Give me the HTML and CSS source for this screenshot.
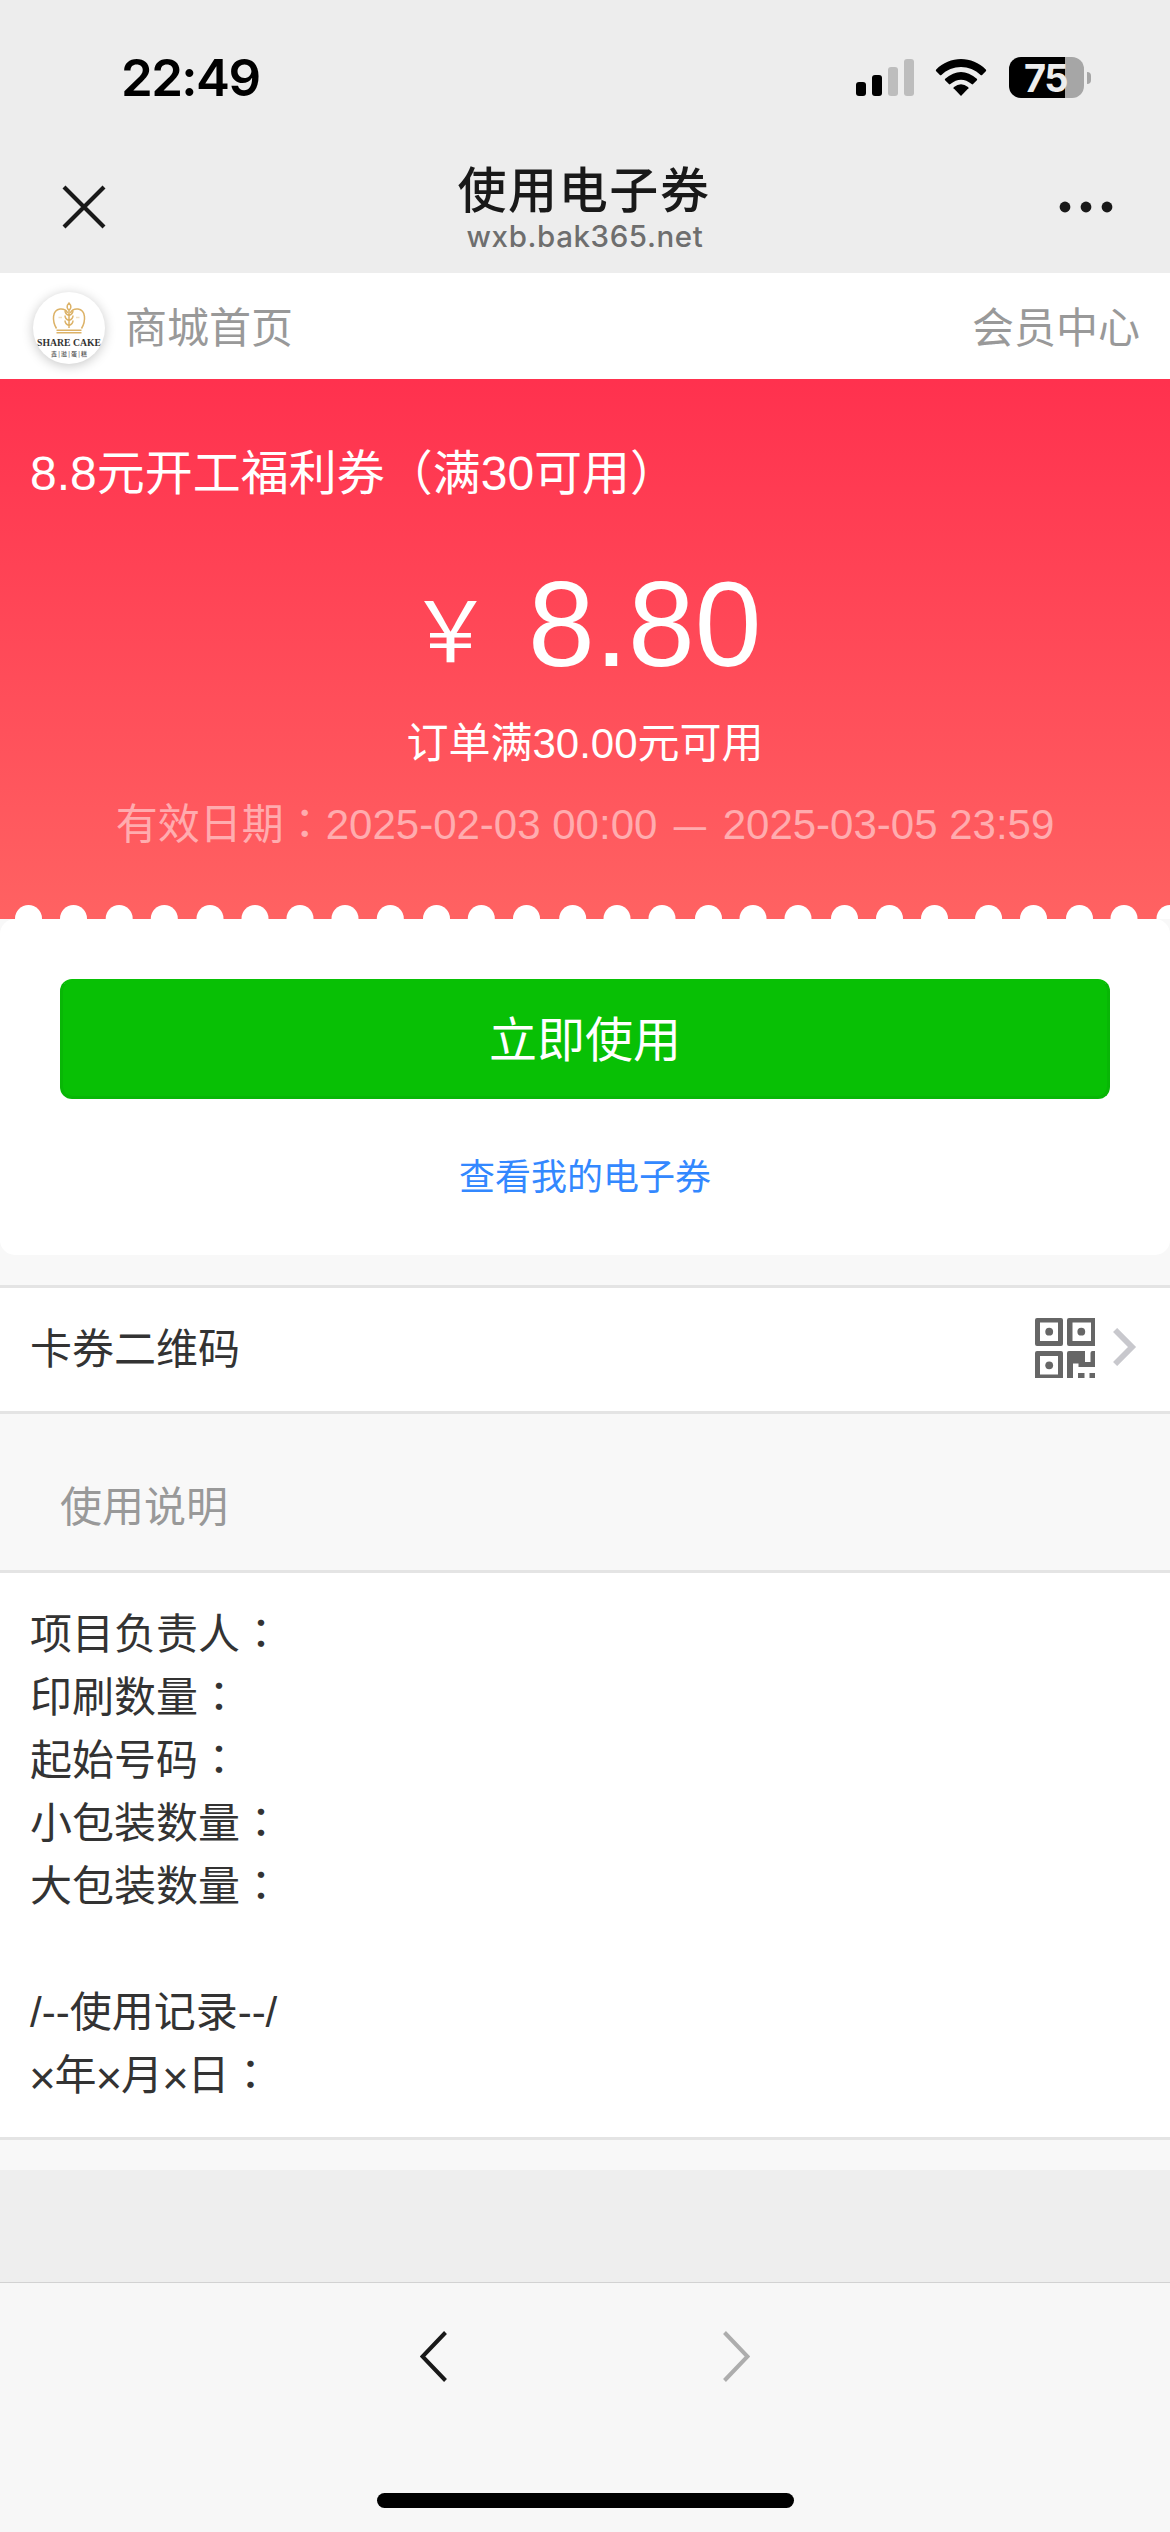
FILE: index.html
```html
<!DOCTYPE html>
<html lang="zh-CN">
<head>
<meta charset="utf-8">
<title>使用电子券</title>
<link rel="stylesheet" href="styles.css">
</head>
<body>
<header class="top">
  <div class="status">
    <span class="time">22:49</span>
    <div class="status-icons">
      <svg width="58" height="37" viewBox="0 0 58 37">
        <rect x="0" y="23" width="10" height="14" rx="3"/>
        <rect x="16" y="16" width="10" height="21" rx="3"/>
        <rect x="32" y="8" width="10" height="29" rx="3" fill="#bdbdbd"/>
        <rect x="48" y="0" width="10" height="37" rx="3" fill="#bdbdbd"/>
      </svg>
      <svg class="wifi" width="52" height="37" viewBox="0 0 52 37">
        <path d="M26 37 L18.6 29.3 Q18.3 28.6 19 28 Q26 22.6 33 28 Q33.700 28.6 33.400 29.300 Z"/>
        <path d="M10.200 19.800 Q26 6 41.800 19.800 Q42.600 20.500 41.900 21.300 L38.100 25.100 Q37.400 25.700 36.600 25.100 Q26 16.200 15.400 25.100 Q14.600 25.700 13.900 25.100 L10.100 21.300 Q9.400 20.500 10.200 19.800 Z"/>
        <path d="M1.200 10.600 C14.500 -3.500 37.500 -3.500 50.800 10.600 Q51.500 11.400 50.800 12.200 L47.100 15.900 Q46.400 16.600 45.600 15.900 C35 5.200 17 5.200 6.400 15.900 Q5.600 16.600 4.900 15.900 L1.200 12.200 Q0.500 11.400 1.200 10.600 Z"/>
      </svg>
      <div class="battery"><div class="battery-body"><span>75</span></div><i class="battery-nub"></i></div>
    </div>
  </div>
  <div class="titlebar">
    <svg class="close" width="44" height="44" viewBox="0 0 44 44"><path d="M2 2L42 42M42 2L2 42" stroke="#191919" stroke-width="4.200" fill="none"/></svg>
    <div class="heading">
      <h1>使用电子券</h1>
      <p>wxb.bak365.net</p>
    </div>
    <svg class="more" width="54" height="12" viewBox="0 0 54 12" fill="#191919"><circle cx="6" cy="6" r="5.400"/><circle cx="27" cy="6" r="5.400"/><circle cx="48" cy="6" r="5.400"/></svg>
  </div>
</header>

<nav class="shop">
  <a class="home">
    <svg class="logo" width="72" height="72" viewBox="0 0 72 72">
      <g fill="none" stroke="#dcb267" stroke-width="1.500">
        <path d="M23.500 36.500C19 29 19 18 27 17C31 16.500 34 18.500 34.500 21M48.500 36.500C53 29 53 18 45 17C41 16.500 38 18.500 37.500 21"/>
        <path d="M23.500 38.200H48.500M23.500 40.800H48.500"/>
        <path d="M36 11C33 14 34 17 36 18C38 17 39 14 36 11ZM36 17V36M32 18.500Q32 22 36 23.500Q40 22 40 18.500M32 23.500Q32 27 36 28.500Q40 27 40 23.500M32 28.500Q32 32 36 33.500Q40 32 40 28.500"/>
        <path d="M25.500 25.500H29M43 25.500H46.500" stroke-opacity=".4"/>
      </g>
      <text class="logo-name" x="36" y="54" textLength="64" lengthAdjust="spacingAndGlyphs">SHARE CAKE</text>
      <text class="logo-sub" x="36" y="63.500" textLength="36" lengthAdjust="spacing">鑫|溢|蛋|糕</text>
    </svg>
    <span>商城首页</span>
  </a>
  <a>会员中心</a>
</nav>

<section class="coupon">
  <h2>8.8元开工福利券（满30可用）</h2>
  <div class="price"><span class="yen">￥</span> 8.80</div>
  <p class="rule">订单满30.00元可用</p>
  <p class="date">有效日期<b class="colon" lang="zh-TW">：</b>2025-02-03 00:00 <span class="dash">—</span> 2025-03-05 23:59</p>
  <svg class="scallop" width="1170" height="14" viewBox="0 0 1170 14" fill="#fff">
    <circle cx="28.500" cy="13.500" r="13.500"/><circle cx="73.500" cy="13.500" r="13.500"/><circle cx="119.200" cy="13.500" r="13.500"/><circle cx="164.300" cy="13.500" r="13.500"/><circle cx="210" cy="13.500" r="13.500"/><circle cx="255" cy="13.500" r="13.500"/><circle cx="300" cy="13.500" r="13.500"/><circle cx="345" cy="13.500" r="13.500"/><circle cx="390.300" cy="13.500" r="13.500"/><circle cx="436.500" cy="13.500" r="13.500"/><circle cx="481.300" cy="13.500" r="13.500"/><circle cx="526.500" cy="13.500" r="13.500"/><circle cx="572.700" cy="13.500" r="13.500"/><circle cx="617" cy="13.500" r="13.500"/><circle cx="662" cy="13.500" r="13.500"/><circle cx="708.500" cy="13.500" r="13.500"/><circle cx="753" cy="13.500" r="13.500"/><circle cx="798" cy="13.500" r="13.500"/><circle cx="844.500" cy="13.500" r="13.500"/><circle cx="889.500" cy="13.500" r="13.500"/><circle cx="934.500" cy="13.500" r="13.500"/><circle cx="988.600" cy="13.500" r="13.500"/><circle cx="1033.500" cy="13.500" r="13.500"/><circle cx="1079.500" cy="13.500" r="13.500"/><circle cx="1124" cy="13.500" r="13.500"/><circle cx="1170" cy="13.500" r="13.500"/>
  </svg>
</section>

<section class="actions">
  <button class="use">立即使用</button>
  <a class="mine">查看我的电子券</a>
</section>

<section class="row">
  <span>卡券二维码</span>
  <div class="row-end">
    <svg width="60" height="60" viewBox="0 0 60 60" fill="#666">
      <path fill-rule="evenodd" d="M2 0H26Q28 0 28 2V26Q28 28 26 28H2Q0 28 0 26V2Q0 0 2 0ZM5 4.500V23H23V4.500Z"/>
      <path fill-rule="evenodd" d="M34 0H60V28H34Q32 28 32 26V2Q32 0 34 0ZM37.500 4.500V23H56V4.500Z"/>
      <path fill-rule="evenodd" d="M2 33H26Q28 33 28 35V60H0V35Q0 33 2 33ZM5 38V56.500H23V38Z"/>
      <circle cx="14.200" cy="13.700" r="3.900"/><circle cx="46.300" cy="13.700" r="3.900"/><circle cx="14.200" cy="47.300" r="3.900"/>
      <path d="M34 33H50V44H55.500V35Q55.500 33 57.500 33H60V49H43.500V45.500H38V60H32V35Q32 33 34 33ZM43 55H49.500V60H43ZM54.500 55H60V60H54.500Z"/>
    </svg>
    <svg class="chevron" width="24" height="38" viewBox="0 0 24 38"><path d="M2.100 2L19 19L2.100 36" fill="none" stroke="#c8c8cd" stroke-width="5.800"/></svg>
  </div>
</section>

<h3 class="label">使用说明</h3>

<section class="notes">
  <p>项目负责人<b class="colon" lang="zh-TW">：</b></p>
  <p>印刷数量<b class="colon" lang="zh-TW">：</b></p>
  <p>起始号码<b class="colon" lang="zh-TW">：</b></p>
  <p>小包装数量<b class="colon" lang="zh-TW">：</b></p>
  <p>大包装数量<b class="colon" lang="zh-TW">：</b></p>
  <p>&nbsp;</p>
  <p>/--使用记录--/</p>
  <p><span class="times">×</span>年<span class="times">×</span>月<span class="times">×</span>日<b class="colon" lang="zh-TW">：</b></p>
</section>

<div class="rest"></div>

<footer class="toolbar">
  <div class="arrows">
    <svg width="27" height="51" viewBox="0 0 27 51"><path d="M25.500 1.500L2.500 25.500L25.500 49.500" fill="none" stroke="#191919" stroke-width="4"/></svg>
    <svg width="27" height="51" viewBox="0 0 27 51"><path d="M1.500 1.500L24.500 25.500L1.500 49.500" fill="none" stroke="#adadad" stroke-width="4"/></svg>
  </div>
  <div class="indicator"></div>
</footer>
</body>
</html>
```
FILE: styles.css
```css
* { box-sizing: border-box; margin: 0; padding: 0; }
body {
  width: 1170px;
  height: 2532px;
  display: flex;
  flex-direction: column;
  background: #f8f8f8;
  font: 42px/63px "Liberation Sans", "Noto Sans CJK SC", sans-serif;
  color: #333;
  overflow: hidden;
}
svg { display: block; flex: none; }
p, span, a, h1, h2, h3 { white-space: nowrap; font-weight: 400; }
.colon { font-family: "Noto Sans CJK TC", sans-serif; font-weight: 400; line-height: 1; }

.top { height: 273px; background: #ededed; }
.status {
  height: 156px;
  display: flex;
  justify-content: space-between;
  padding: 57px 79px 0 121px;
}
.time { font: 600 51px/42px Inter, sans-serif; color: #000; letter-spacing: -1.6px; }
.status-icons { display: flex; align-items: center; height: 41px; }
.wifi { margin: 0 22px 0 21px; }
.battery { display: flex; align-items: center; gap: 3px; }
.battery-body {
  width: 75px; height: 41px; border-radius: 12px;
  background: linear-gradient(90deg, #000 56px, #a6a6a6 56px);
  text-align: center;
}
.battery-body span { display: block; font: 700 38px/42px Inter, sans-serif; color: #ededed; letter-spacing: -1.5px; padding-right: 2px; }
.battery-nub { width: 4px; height: 12px; border-radius: 0 4px 4px 0; background: #a6a6a6; }

.titlebar { height: 117px; display: flex; justify-content: space-between; padding: 0 57px 0 62px; }
.close { margin-top: 29px; }
.more { margin-top: 45px; }
.heading { text-align: center; padding-left: 3px; }
.heading h1 { font: 500 49px/62px "Noto Sans CJK SC", sans-serif; color: #191919; letter-spacing: 1.6px; }
.heading p { font: 500 29.5px/34px Inter, sans-serif; color: #6e6e6e; letter-spacing: .6px; margin-top: 1px; padding-left: 2px; }

.shop {
  height: 106px; background: #fff; color: #999;
  display: flex; align-items: center; justify-content: space-between;
  padding: 4px 30px 0 33px;
}
.home { display: flex; align-items: center; gap: 20px; }
.logo { border-radius: 50%; background: #fff; box-shadow: 0 2px 12px rgba(0, 0, 0, .22); }
.logo-name { font: 700 9.500px "Liberation Serif", serif; fill: #333; text-anchor: middle; }
.logo-sub { font: 500 6px "Noto Sans CJK SC", sans-serif; fill: #555; text-anchor: middle; }

.coupon {
  height: 540px;
  display: flex; flex-direction: column;
  background: linear-gradient(#ff314e, #ff6262);
  color: #fff; text-align: center;
}
.coupon h2 { font-size: 48px; line-height: 72px; text-align: left; padding: 59px 30px 0; }
.price { font-size: 120px; line-height: 150px; margin-top: 39px; white-space: nowrap; }
.yen { font-size: 84px; line-height: 1; vertical-align: 4px; margin-right: 2px; }
.rule { margin-top: 13px; }
.date { margin-top: 18px; color: rgba(255, 255, 255, .5); }
.dash { display: inline-block; width: 42px; transform: scaleX(.77); }
.scallop { margin-top: auto; }

.actions {
  height: 336px; background: #fff; border-radius: 15px;
  display: flex; flex-direction: column; align-items: center;
  padding: 60px 60px 0;
}
.use {
  width: 1050px; height: 120px; border: 3px solid #08b606; border-top-color: #08c005; border-radius: 12px;
  background: #08c005; color: #fff; padding-bottom: 5px;
  font: 48px/109px "Noto Sans CJK SC", sans-serif;
}
.mine { font-size: 36px; line-height: 54px; margin-top: 52px; color: #3388ff; }

.row {
  height: 129px; margin-top: 30px; background: #fff;
  border: solid #e4e4e4; border-width: 3px 0;
  display: flex; align-items: center; justify-content: space-between;
  padding: 0 33px 0 30px;
}
.row-end { display: flex; align-items: center; gap: 18px; padding-bottom: 3px; }
.chevron { margin-bottom: 2px; }
.label { height: 156px; padding: 62px 60px 0; font-size: 42px; color: #999; }
.notes { height: 570px; background: #fff; border: solid #e4e4e4; border-width: 3px 0; padding: 30px; }
.notes p { height: 63px; }
.times { display: inline-block; width: 24.500px; font-size: 46px; line-height: 1; text-indent: -1px; vertical-align: -4px; }
.rest { height: 112px; margin-top: 30px; background: #eee; }
.toolbar {
  height: 250px; background: #f7f7f7; border-top: 1px solid #d2d2d2;
  display: flex; flex-direction: column; align-items: center; justify-content: space-between;
  padding: 48px 0 24px;
}
.arrows { display: flex; gap: 276px; }
.indicator { width: 417px; height: 15px; border-radius: 8px; background: #000; }
```
